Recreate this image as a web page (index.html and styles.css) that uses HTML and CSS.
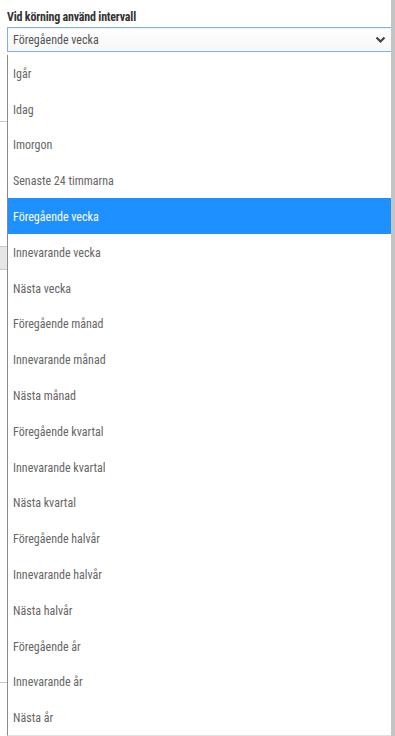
FILE: index.html
```html
<!DOCTYPE html>
<html>
  <head>
    <meta charset="UTF-8" />
    <meta name="viewport" content="width=device-width, initial-scale=1.0" />
    <title>Intervall</title>
    <link rel="stylesheet" href="styles.css">
  </head>
  <body>
    <div class="page">
      <!-- innehåll bakom listan, syns bara i vänsterkanten -->
      <div class="gutter">
        <span class="gutter-line first"></span>
        <span class="gutter-block"></span>
        <span class="gutter-line last"></span>
      </div>

      <div class="form">
        <label class="field-label" for="interval">Vid körning använd intervall</label>
        <div class="select" id="interval">
          <span class="select-value">Föregående vecka</span>
          <svg class="chevron" width="11" height="8" viewBox="0 0 11 8">
            <path d="M1.5 1.5 L5.5 5.5 L9.5 1.5" fill="none" stroke="#444" stroke-width="2.2" />
          </svg>
        </div>

        <ul class="options">
          <li>Igår</li>
          <li>Idag</li>
          <li>Imorgon</li>
          <li>Senaste 24 timmarna</li>
          <li class="selected">Föregående vecka</li>
          <li>Innevarande vecka</li>
          <li>Nästa vecka</li>
          <li>Föregående månad</li>
          <li>Innevarande månad</li>
          <li>Nästa månad</li>
          <li>Föregående kvartal</li>
          <li>Innevarande kvartal</li>
          <li>Nästa kvartal</li>
          <li>Föregående halvår</li>
          <li>Innevarande halvår</li>
          <li>Nästa halvår</li>
          <li>Föregående år</li>
          <li>Innevarande år</li>
          <li>Nästa år</li>
        </ul>
      </div>

      <div class="scroll-edge"></div>
    </div>
  </body>
</html>
```

FILE: styles.css
```css
*,
*::after,
*::before {
  box-sizing: border-box;
}
html,
body {
  margin: 0;
  height: 100%;
}
body {
  font-family: Roboto, 'Liberation Sans', sans-serif;
  font-size: 12px;
  font-stretch: 80%;
  color: #555;
  background-color: #fff;
  overflow: hidden;
}
.page {
  display: flex;
  height: 736px;
}
/* vänsterkant: rester av sidan bakom listan */
.gutter {
  width: 7px;
  flex-shrink: 0;
  display: flex;
  flex-direction: column;
}
.gutter-line {
  display: block;
  height: 1px;
  background-color: #c8c8c8;
}
.gutter-line.first {
  margin-top: 121px;
}
.gutter-block {
  display: block;
  height: 24px;
  margin-top: 124px;
  background-color: #e6e6e6;
  border-top: 1px solid #c8c8c8;
  border-bottom: 1px solid #c8c8c8;
}
.gutter-line.last {
  margin-top: 412px;
}
.form {
  flex: 1;
  min-width: 0;
  padding-top: 9px;
  display: flex;
  flex-direction: column;
}
.field-label {
  display: block;
  font-weight: 700;
  font-stretch: 75%;
  letter-spacing: -0.2px;
  color: #333;
  line-height: 16px;
  margin-bottom: 2px;
}
/* stängd select med fokus */
.select {
  display: flex;
  align-items: center;
  justify-content: space-between;
  height: 29px;
  padding: 1px 5px 0 5px;
  border: 1px solid #7fb1e3;
  border-right: 0;
  background: linear-gradient(#fff, #f7f7f7);
  box-shadow: inset 0 1px 1px rgba(0, 0, 0, 0.06);
  color: #555;
}
/* öppen lista */
.options {
  list-style: none;
  margin: 3px 0 0;
  padding: 0;
  flex: 1;
  border-left: 1px solid #8a8a8a;
  border-bottom: 1px solid #e2e2e2;
}
.options li {
  height: 35.8px;
  line-height: 35.8px;
  padding-top: 2px;
  padding-left: 5px;
  color: #666;
}
.options li.selected {
  background-color: #1e90ff;
  color: #fff;
}
.scroll-edge {
  width: 4px;
  flex-shrink: 0;
  background-color: #c4c4c4;
}
```
